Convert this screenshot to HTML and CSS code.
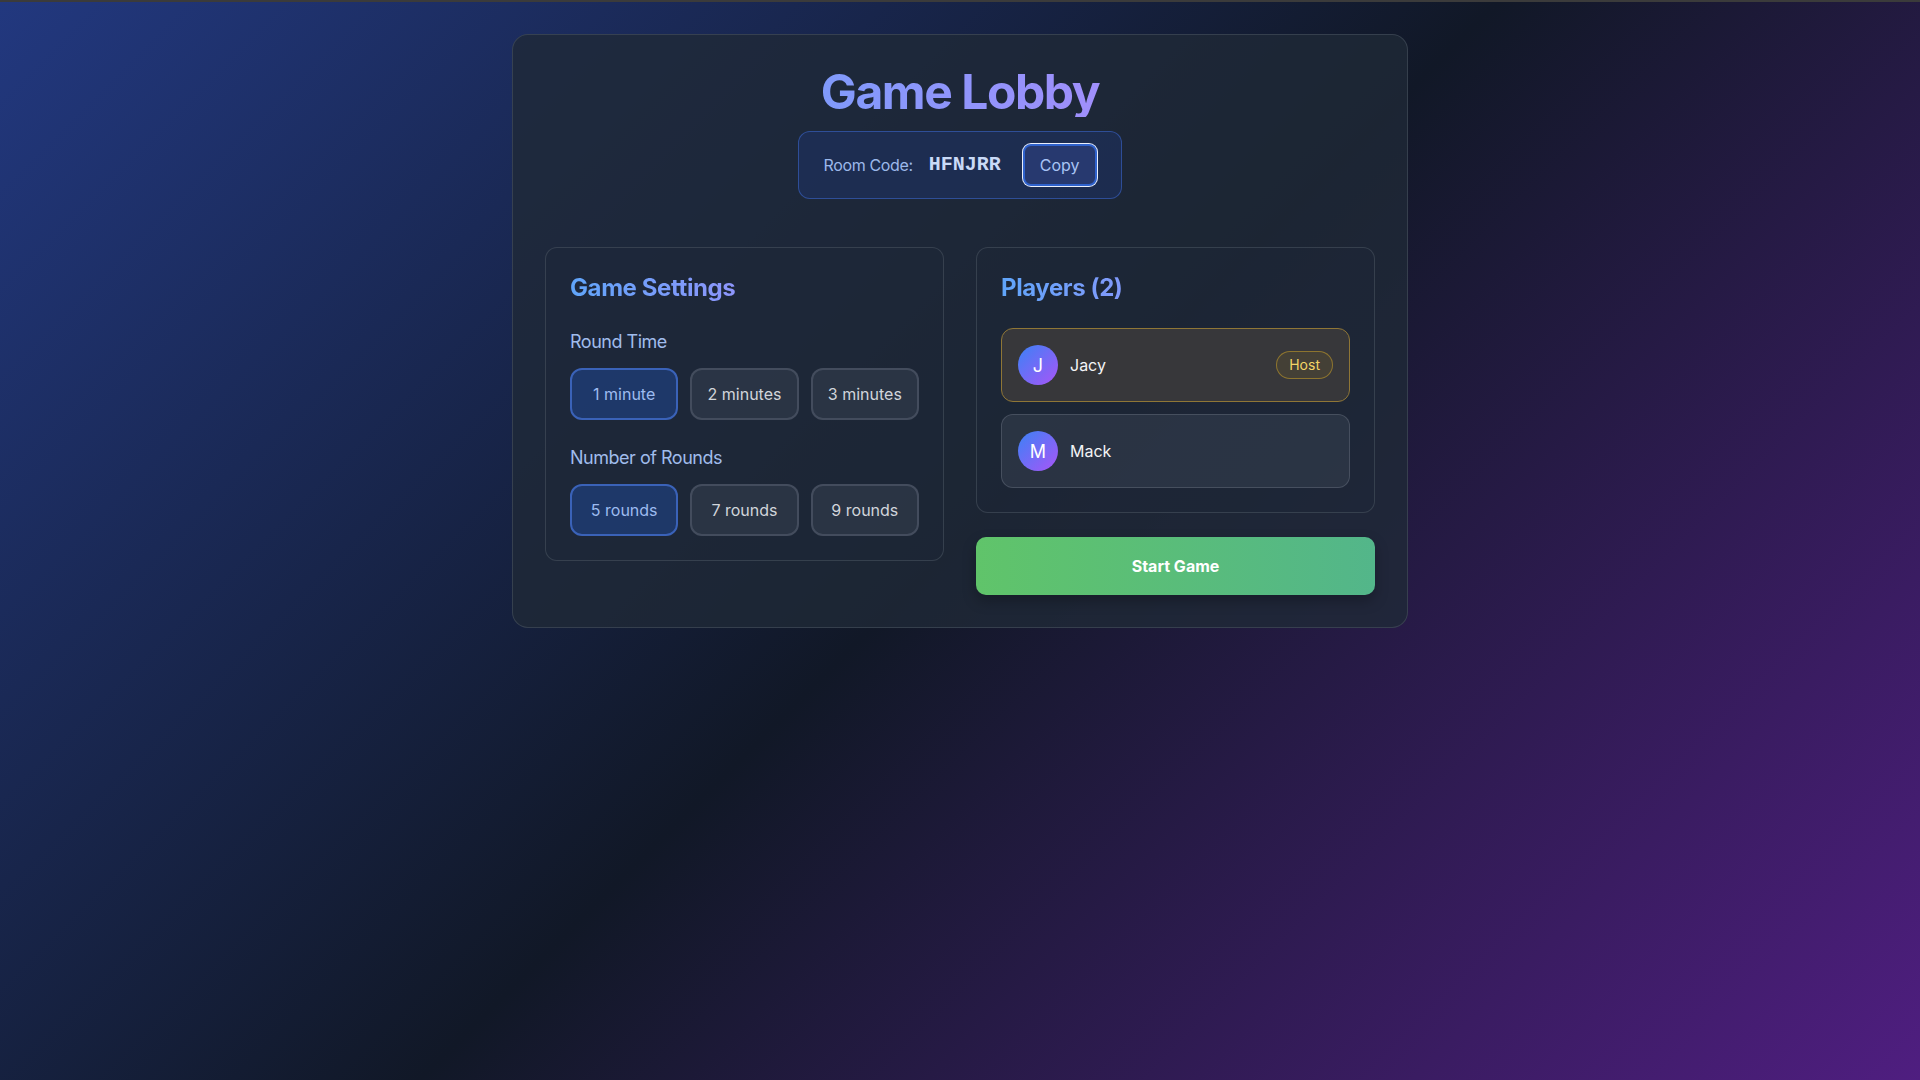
FILE: index.html
```html
<!DOCTYPE html>
<html lang="en">
<head>
<meta charset="utf-8">
<title>Game Lobby</title>
<link rel="stylesheet" href="styles.css">
</head>
<body>
<main class="lobby">
  <header class="lobby-header">
    <h1 class="title">Game Lobby</h1>
    <div class="room-code">
      <span class="room-label">Room Code:</span>
      <span class="room-value">HFNJRR</span>
      <button class="copy-btn">Copy</button>
    </div>
  </header>
  <div class="columns">
    <section class="panel settings">
      <h2 class="panel-title">Game Settings</h2>
      <div class="setting">
        <div class="setting-label">Round Time</div>
        <div class="options">
          <button class="option selected">1 minute</button>
          <button class="option">2 minutes</button>
          <button class="option">3 minutes</button>
        </div>
      </div>
      <div class="setting">
        <div class="setting-label">Number of Rounds</div>
        <div class="options">
          <button class="option selected">5 rounds</button>
          <button class="option">7 rounds</button>
          <button class="option">9 rounds</button>
        </div>
      </div>
    </section>
    <div class="right-col">
      <section class="panel players">
        <h2 class="panel-title">Players (2)</h2>
        <ul class="player-list">
          <li class="player host">
            <span class="avatar">J</span>
            <span class="player-name">Jacy</span>
            <span class="badge">Host</span>
          </li>
          <li class="player">
            <span class="avatar">M</span>
            <span class="player-name">Mack</span>
          </li>
        </ul>
      </section>
      <button class="start-btn">Start Game</button>
    </div>
  </div>
</main>
</body>
</html>
```

FILE: styles.css
```css
* { box-sizing: border-box; }

html, body { margin: 0; padding: 0; }

body {
  min-height: 100vh;
  border-top: 2px solid #3b3b3b;
  padding: 32px;
  font-family: Inter, "Noto Sans", sans-serif;
  background: linear-gradient(135deg, #22387f 0%, #111827 50%, #4f1e80 100%);
  background-attachment: fixed;
  color: #e5e7eb;
}

.lobby {
  width: 896px;
  margin: 0 auto;
  padding: 32px;
  background: rgba(31, 41, 55, 0.8);
  border: 1px solid rgba(75, 85, 99, 0.55);
  border-radius: 16px;
}

.lobby-header {
  display: flex;
  flex-direction: column;
  align-items: center;
  margin-bottom: 48px;
}

.title {
  margin: 0 0 14px;
  font-size: 48px;
  line-height: 50px;
  font-weight: 700;
  letter-spacing: -0.03em;
  width: 100%;
  text-align: center;
  background: linear-gradient(90deg, #60a5fa, #c084fc);
  -webkit-background-clip: text;
  background-clip: text;
  color: transparent;
}

.room-code {
  display: flex;
  align-items: center;
  padding: 12px 24px;
  background: rgba(30, 58, 138, 0.3);
  border: 1px solid rgba(59, 100, 200, 0.6);
  border-radius: 12px;
}

.room-label {
  font-size: 16px;
  line-height: 24px;
  letter-spacing: -0.022em;
  color: #9cb8ea;
  margin-right: 16px;
}

.room-value {
  font-family: "Liberation Mono", "DejaVu Sans Mono", monospace;
  font-weight: 700;
  font-size: 20px;
  line-height: 28px;
  color: #c9daf7;
  margin-right: 22px;
}

.copy-btn {
  font-family: inherit;
  font-size: 16px;
  line-height: 24px;
  padding: 7px 15px;
  color: #a8c4f5;
  background: #27396f;
  border: 2px solid #2f62cc;
  border-radius: 8px;
  box-shadow: 0 0 0 1px #e9eefb;
}

.columns {
  display: grid;
  grid-template-columns: 1fr 1fr;
  gap: 32px;
  align-items: start;
}

.panel {
  padding: 24px;
  background: rgba(31, 41, 55, 0.3);
  border: 1px solid rgba(75, 85, 99, 0.55);
  border-radius: 12px;
}

.panel-title {
  margin: 0 0 24px;
  font-size: 24px;
  line-height: 32px;
  font-weight: 700;
  letter-spacing: -0.017em;
  background: linear-gradient(90deg, #60a5fa, #c084fc);
  -webkit-background-clip: text;
  background-clip: text;
  color: transparent;
}

.setting + .setting { margin-top: 24px; }

.setting-label {
  font-size: 18px;
  line-height: 28px;
  letter-spacing: -0.027em;
  color: #a0bcec;
  margin-bottom: 12px;
}

.options {
  display: grid;
  grid-template-columns: repeat(3, 1fr);
  gap: 12px;
}

.option {
  font-family: inherit;
  font-size: 16px;
  line-height: 24px;
  padding: 12px 8px;
  color: #d1d5db;
  background: rgba(55, 65, 81, 0.5);
  border: 2px solid rgba(90, 98, 114, 0.55);
  border-radius: 12px;
}

.option.selected {
  color: #9dbbf0;
  background: rgba(37, 99, 235, 0.28);
  border-color: #3a62b8;
}

.right-col {
  display: flex;
  flex-direction: column;
  gap: 24px;
}

.player-list {
  list-style: none;
  margin: 0;
  padding: 0;
  display: flex;
  flex-direction: column;
  gap: 12px;
}

.player {
  display: flex;
  align-items: center;
  gap: 12px;
  padding: 16px;
  background: rgba(55, 65, 81, 0.5);
  border: 1px solid rgba(90, 98, 114, 0.6);
  border-radius: 12px;
}

.player.host {
  background: #37373a;
  border-color: #8f7636;
}

.avatar {
  width: 40px;
  height: 40px;
  border-radius: 50%;
  display: flex;
  align-items: center;
  justify-content: center;
  background: linear-gradient(135deg, #3b82f6, #a855f7);
  color: #ffffff;
  font-size: 18px;
}

.player-name {
  flex: 1;
  font-size: 16px;
  line-height: 24px;
  color: #f3f4f6;
}

.badge {
  font-size: 14px;
  line-height: 20px;
  padding: 3px 12px;
  color: #f3d566;
  background: rgba(234, 179, 8, 0.08);
  border: 1px solid rgba(202, 160, 40, 0.55);
  border-radius: 999px;
}

.start-btn {
  font-family: inherit;
  width: 100%;
  font-size: 16px;
  line-height: 24px;
  font-weight: 700;
  padding: 17px 0;
  color: #ffffff;
  border: none;
  border-radius: 10px;
  background: linear-gradient(90deg, #60c46a, #53b68a);
  box-shadow: 0 6px 14px rgba(0, 0, 0, 0.25);
}
```
